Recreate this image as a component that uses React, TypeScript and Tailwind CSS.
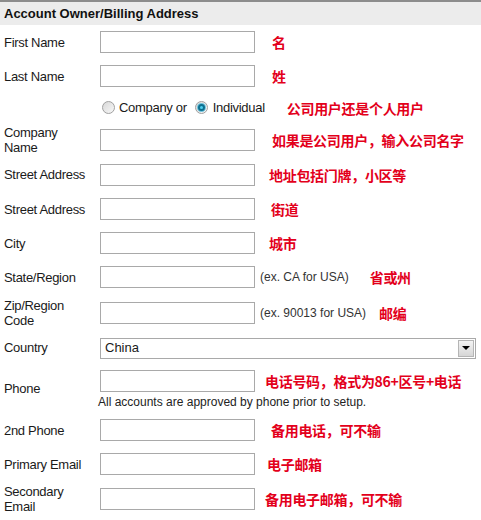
import React from 'react';

type Row = {
    label: string;
    h: string;
    note: string;
    noteMl: string;
    hint?: string;
};

const rows1: Row[] = [
    { label: 'First Name', h: 'h-[34px]', note: '名', noteMl: 'ml-[17px]' },
    { label: 'Last Name', h: 'h-[34px]', note: '姓', noteMl: 'ml-[17px]' },
];

const rows2: Row[] = [
    { label: 'Company Name', h: 'h-[35px]', note: '如果是公司用户，输入公司名字', noteMl: 'ml-[17px]' },
    { label: 'Street Address', h: 'h-[35px]', note: '地址包括门牌，小区等', noteMl: 'ml-[14px]' },
    { label: 'Street Address', h: 'h-[34px]', note: '街道', noteMl: 'ml-[16px]' },
    { label: 'City', h: 'h-[34px]', note: '城市', noteMl: 'ml-[14px]' },
    { label: 'State/Region', h: 'h-[34px]', note: '省或州', noteMl: 'ml-[21px]', hint: '(ex. CA for USA)' },
    { label: 'Zip/Region Code', h: 'h-[37px]', note: '邮编', noteMl: 'ml-[13px]', hint: '(ex. 90013 for USA)' },
];

const rows3: Row[] = [
    { label: '2nd Phone', h: 'h-[34px]', note: '备用电话，可不输', noteMl: 'ml-[16px]' },
    { label: 'Primary Email', h: 'h-[34px]', note: '电子邮箱', noteMl: 'ml-[12px]' },
    { label: 'Secondary Email', h: 'h-[36px]', note: '备用电子邮箱，可不输', noteMl: 'ml-[10px]' },
];

const noteCls = "font-bold text-[14px] leading-[16px] text-[#e3001b] font-['Noto_Sans_CJK_SC',sans-serif]";

function TextBox() {
    return <div className="h-[22px] w-[155px] shrink-0 border border-[#a9a9a9] bg-white" />;
}

function FieldRow({ row }: { row: Row }) {
    return (
        <div className={`flex items-center ${row.h}`}>
            <div className="w-[100px] shrink-0 pl-1 pr-[8px] leading-[15px]">{row.label}</div>
            <TextBox />
            {row.hint && <span className="ml-[5px] text-[12px] tracking-normal text-[#333]">{row.hint}</span>}
            <span className={`${row.noteMl} ${noteCls}`}>{row.note}</span>
        </div>
    );
}

function Radio({ checked }: { checked?: boolean }) {
    return (
        <span className="flex h-[13px] w-[13px] items-center justify-center rounded-full border border-[#a0a0a0] bg-gradient-to-br from-[#d8d8d8] to-[#f8f8f8]">
            {checked && (
                <span className="flex h-[7px] w-[7px] items-center justify-center rounded-full bg-[#0d6f8f] ring-1 ring-[#6fc3dc]">
                    <span className="h-[3px] w-[3px] rounded-full bg-[#4fd0ef]" />
                </span>
            )}
        </span>
    );
}

export default function App() {
    return (
        <div className="w-[481px] h-[520px] overflow-hidden bg-white font-['Liberation_Sans',Arial,sans-serif] text-[13px] tracking-[-0.3px] text-[#1a1a1a]">
            {/* Header */}
            <div className="flex h-[25px] items-center border-t-2 border-[#8c8c8c] bg-[#ececec] pl-1 text-[13px] font-bold tracking-normal text-[#111]">
                Account Owner/Billing Address
            </div>

            {rows1.map((r, i) => (
                <FieldRow key={i} row={r} />
            ))}

            {/* Company / Individual */}
            <div className="flex h-[29px] items-center pl-[102px]">
                <Radio />
                <span className="ml-[4px]">Company or</span>
                <span className="ml-[8px]">
                    <Radio checked />
                </span>
                <span className="ml-[5px]">Individual</span>
                <span className={`ml-[22px] ${noteCls}`}>公司用户还是个人用户</span>
            </div>

            {rows2.map((r, i) => (
                <FieldRow key={i} row={r} />
            ))}

            {/* Country */}
            <div className="flex h-[34px] items-center">
                <div className="w-[100px] shrink-0 pl-1">Country</div>
                <div className="flex h-[21px] w-[376px] items-center justify-between border border-[#a9a9a9] bg-white pl-[4px] pr-[1px]">
                    <span className="tracking-normal">China</span>
                    <span className="flex h-[17px] w-[16px] items-center justify-center border border-[#b5b5b5] bg-gradient-to-b from-[#f4f4f4] to-[#d6d6d6]">
                        <span className="h-0 w-0 border-x-[4px] border-t-[4px] border-x-transparent border-t-black" />
                    </span>
                </div>
            </div>

            {/* Phone */}
            <div className="flex h-[48px] items-center">
                <div className="w-[100px] shrink-0 pl-1">Phone</div>
                <div className="flex flex-col">
                    <div className="flex items-center">
                        <TextBox />
                        <span className={`ml-[10px] ${noteCls}`}>电话号码，格式为86+区号+电话</span>
                    </div>
                    <span className="-ml-0.5 mt-[3px] text-[12px] leading-[14px] tracking-normal text-[#222]">
                        All accounts are approved by phone prior to setup.
                    </span>
                </div>
            </div>

            {rows3.map((r, i) => (
                <FieldRow key={i} row={r} />
            ))}
        </div>
    );
}
